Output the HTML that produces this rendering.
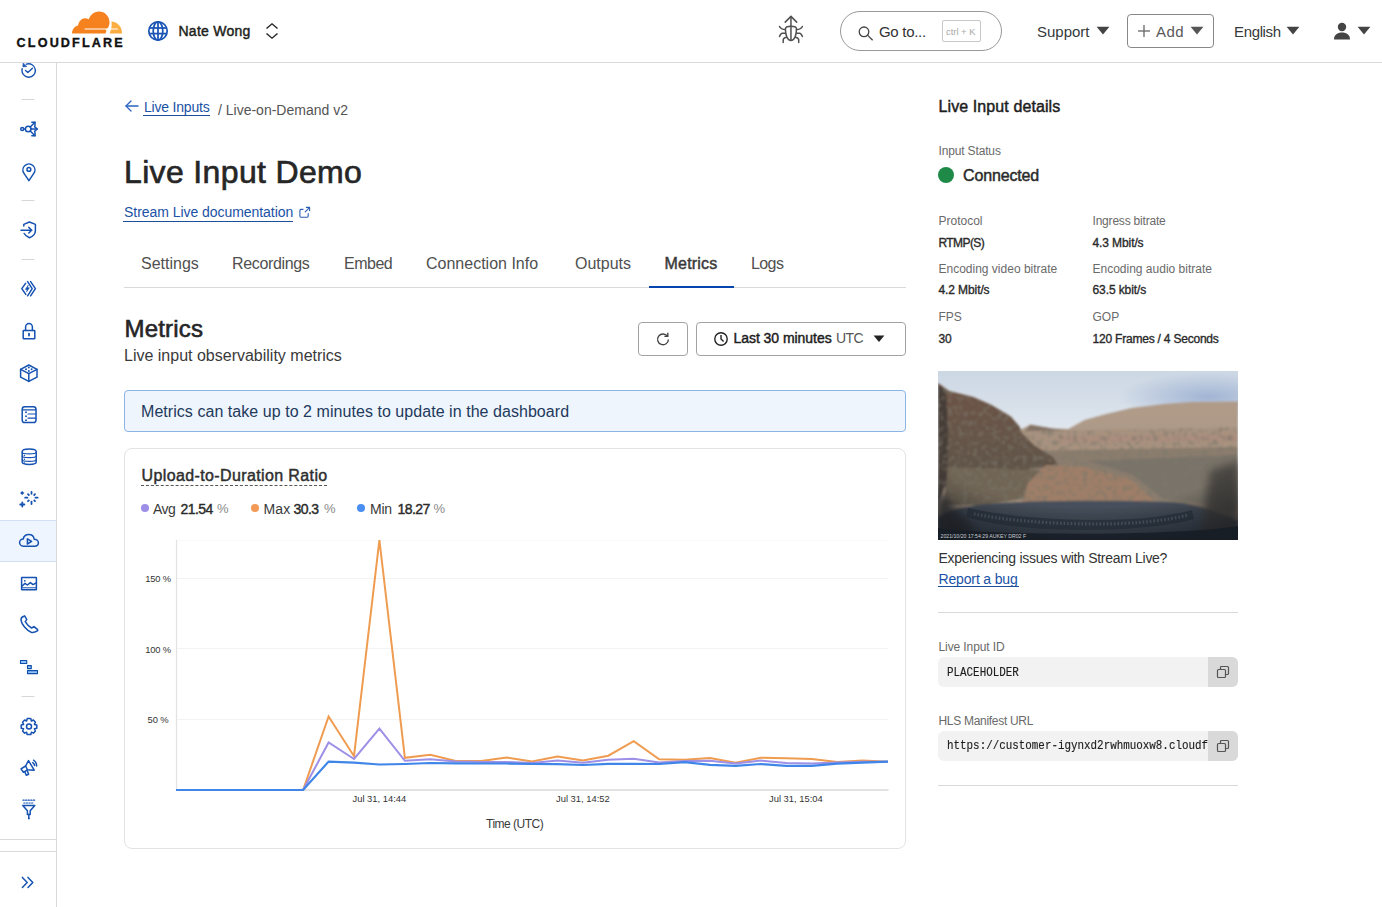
<!DOCTYPE html>
<html><head><meta charset="utf-8">
<style>
*{box-sizing:border-box;margin:0;padding:0}
html,body{width:1382px;height:907px;overflow:hidden;background:#fff;font-family:"Liberation Sans",sans-serif;color:#313131}
.t{position:absolute;line-height:1;white-space:nowrap}
.hdr{position:absolute;left:0;top:0;width:1382px;height:63px;border-bottom:1px solid #d9d9d9;background:#fff}
.side{position:absolute;left:0;top:63px;width:57px;height:844px;border-right:1px solid #d9d9d9;background:#fff}
.ic{position:absolute}
.sep{position:absolute;left:22px;width:12px;height:1px;background:#d9d9d9}
a{color:#0a52b5;text-decoration:none}
</style></head><body>
<!-- HEADER -->
<div class="hdr"></div>
<svg class="ic" style="left:70px;top:10px" width="54" height="25" viewBox="0 0 54 25">
  <path fill="#f6821f" d="M2 23.6 C2 19.5 4.5 16.5 8 15.6 C8.6 11.5 11.5 8.2 15 8.2 C16.5 8.2 17.8 8.6 18.8 9.2 C20.5 4.5 24.5 1.6 29 1.6 C35 1.6 39.5 6.5 39.5 12.2 C39.5 14.5 38.8 16.5 37.6 18.2 L36.2 18.6 L14.6 18.6 L14.6 19.6 L35.2 19.6 C36.2 19.6 36.6 20.4 36.2 21.4 L35.6 23.6 Z"/>
  <path fill="#fbad41" d="M39.6 23.6 L40.6 20.4 C40.9 19.8 41.2 19.6 42 19.6 L48 19.6 L48 18.6 L41.2 18.6 C41.8 16.4 41.8 13.6 41.4 11.4 C47 11.6 52 16.6 52 22.6 L52 23.6 Z"/>
</svg>
<div class="t" style="left:16.6px;top:36.8px;font-size:12.6px;font-weight:700;letter-spacing:2.15px;color:#111;-webkit-text-stroke:0.35px #111">CLOUDFLARE</div>

<svg class="ic" style="left:147px;top:20px" width="22" height="22" viewBox="0 0 22 22" fill="none" stroke="#1a55b5" stroke-width="1.75">
  <circle cx="11" cy="11" r="9.2"/>
  <ellipse cx="11" cy="11" rx="4.8" ry="9.2"/>
  <line x1="11" y1="1.8" x2="11" y2="20.2"/>
  <line x1="2" y1="8" x2="20" y2="8"/>
  <line x1="2" y1="13.6" x2="20" y2="13.6"/>
</svg>
<div class="t" style="left:178.5px;top:24.2px;font-size:14px;-webkit-text-stroke:0.45px #1d1f20;color:#1d1f20;letter-spacing:0.25px">Nate Wong</div>
<svg class="ic" style="left:265px;top:22px" width="14" height="18" viewBox="0 0 14 18" fill="none" stroke="#222" stroke-width="1.4">
  <polyline points="1.5,6.5 7,1.8 12.5,6.5"/>
  <polyline points="1.5,11.5 7,16.2 12.5,11.5"/>
</svg>

<!-- bug -->
<svg class="ic" style="left:777px;top:15px" width="28" height="29" viewBox="0 0 28 29" fill="none" stroke="#505050" stroke-width="1.5" stroke-linecap="round" stroke-linejoin="round">
  <polyline points="8.2,7.1 13.95,1.4 19.7,7.1"/>
  <line x1="13.95" y1="1.6" x2="13.95" y2="25.2"/>
  <path d="M8.4 14 C8.4 12 10 11.3 13.95 11.3 C17.9 11.3 19.5 12 19.5 14 C19.5 20 17.5 25.4 13.95 25.4 C10.4 25.4 8.4 20 8.4 14 Z"/>
  <path d="M8.4 14.6 C5.5 14.5 3.5 13.5 2.5 11.5"/><path d="M19.5 14.6 C22.4 14.5 24.4 13.5 25.4 11.5"/>
  <path d="M8.6 18.3 L5.3 18.3 C4.2 18.3 3.2 19.8 2.5 21.5"/><path d="M19.3 18.3 L22.6 18.3 C23.7 18.3 24.7 19.8 25.4 21.5"/>
  <path d="M9.5 22.2 C7.5 22.6 6.2 23.2 6.2 24.8 L6.2 27.4"/><path d="M18.4 22.2 C20.4 22.6 21.7 23.2 21.7 24.8 L21.7 27.4"/>
</svg>

<!-- search pill -->
<div style="position:absolute;left:840px;top:11px;width:162px;height:40px;border:1px solid #999;border-radius:20px"></div>
<svg class="ic" style="left:857px;top:25px" width="18" height="16" viewBox="0 0 18 16" fill="none" stroke="#444" stroke-width="1.3">
  <circle cx="7" cy="6.8" r="4.8"/>
  <line x1="10.8" y1="10.4" x2="15.6" y2="15.2"/>
</svg>
<div class="t" style="left:879px;top:24px;font-size:15px;color:#333;letter-spacing:-0.3px">Go to...</div>
<div style="position:absolute;left:942px;top:20px;width:39px;height:22px;border:1px solid #c8c8c8;border-radius:2px"></div>
<div class="t" style="left:946px;top:26.5px;font-size:9.4px;color:#a8a8a8">ctrl + K</div>

<div class="t" style="left:1037px;top:24px;font-size:15px;color:#36393a">Support</div>
<svg class="ic" style="left:1096px;top:26px" width="14" height="9" viewBox="0 0 14 9"><polygon points="0.6,0.8 13.4,0.8 7,8.4" fill="#444"/></svg>

<div style="position:absolute;left:1127px;top:14px;width:87px;height:34px;border:1px solid #888;border-radius:4px"></div>
<svg class="ic" style="left:1137px;top:24px" width="14" height="14" viewBox="0 0 14 14" stroke="#666" stroke-width="1.3"><line x1="7" y1="1" x2="7" y2="13"/><line x1="1" y1="7" x2="13" y2="7"/></svg>
<div class="t" style="left:1156px;top:24px;font-size:15px;color:#595959;letter-spacing:0.4px">Add</div>
<svg class="ic" style="left:1190px;top:26px" width="14" height="9" viewBox="0 0 14 9"><polygon points="0.6,0.8 13.4,0.8 7,8.4" fill="#555"/></svg>

<div class="t" style="left:1234px;top:24px;font-size:15px;color:#36393a;letter-spacing:-0.35px">English</div>
<svg class="ic" style="left:1286px;top:26px" width="14" height="9" viewBox="0 0 14 9"><polygon points="0.6,0.8 13.4,0.8 7,8.4" fill="#444"/></svg>

<svg class="ic" style="left:1333px;top:22px" width="18" height="18" viewBox="0 0 18 18" fill="#444">
  <circle cx="9" cy="5" r="4.2"/>
  <path d="M1 17.4 C1 12.5 4.5 10.4 9 10.4 C13.5 10.4 17 12.5 17 17.4 Z"/>
</svg>
<svg class="ic" style="left:1357px;top:26px" width="14" height="9" viewBox="0 0 14 9"><polygon points="0.6,0.8 13.4,0.8 7,8.4" fill="#444"/></svg>
<!-- MAIN -->
<svg class="ic" style="left:124px;top:99px" width="16" height="14" viewBox="0 0 16 14" fill="none" stroke="#2a63c0" stroke-width="1.3" stroke-linecap="round"><line x1="2" y1="7" x2="14" y2="7"/><polyline points="7,2 2,7 7,12"/></svg>
<div class="t" style="left:144px;top:99.8px;font-size:14px;color:#1a52a6;letter-spacing:-0.2px">Live Inputs</div>
<div style="position:absolute;left:143px;top:115px;width:67px;height:1px;background:#1b4f99"></div>
<div class="t" style="left:218px;top:103.2px;font-size:14px;color:#545454">/ Live-on-Demand v2</div>

<div class="t" style="left:124px;top:156.4px;font-size:32px;font-weight:400;-webkit-text-stroke:0.65px #262626;color:#262626;letter-spacing:0.35px">Live Input Demo</div>
<div class="t" style="left:124px;top:205px;font-size:14px;color:#1a52a6;letter-spacing:-0.05px">Stream Live documentation</div>
<div style="position:absolute;left:123px;top:221px;width:170px;height:1px;background:#1b4f99"></div>
<svg class="ic" style="left:298px;top:205px" width="13" height="13" viewBox="0 0 13 13" fill="none" stroke="#2a5fb0" stroke-width="1.1" stroke-linecap="round" stroke-linejoin="round"><path d="M5 4.4 L3 4.4 Q1.9 4.4 1.9 5.5 L1.9 11.1 Q1.9 12.2 3 12.2 L9.1 12.2 Q10.2 12.2 10.2 11.1 L10.2 8.6"/><line x1="7.2" y1="6.8" x2="11.4" y2="2.6"/><polyline points="8.4,2.4 11.6,2.4 11.6,5.6"/></svg>

<!-- tabs -->
<div style="position:absolute;left:124px;top:287px;width:782px;height:1px;background:#d9d9d9"></div>
<div style="position:absolute;left:649px;top:286px;width:85px;height:2px;background:#0545ad"></div>
<div class="t" style="left:141px;top:256px;font-size:16px;color:#505050">Settings</div>
<div class="t" style="left:232px;top:256px;font-size:16px;color:#505050;letter-spacing:-0.35px">Recordings</div>
<div class="t" style="left:344px;top:256px;font-size:16px;color:#505050;letter-spacing:-0.5px">Embed</div>
<div class="t" style="left:426px;top:256px;font-size:16px;color:#505050">Connection Info</div>
<div class="t" style="left:575px;top:256px;font-size:16px;color:#505050">Outputs</div>
<div class="t" style="left:664.5px;top:256px;font-size:16px;-webkit-text-stroke:0.45px #3a3a3a;color:#3a3a3a;letter-spacing:0.2px">Metrics</div>
<div class="t" style="left:751px;top:256px;font-size:16px;color:#505050;letter-spacing:-0.6px">Logs</div>

<!-- metrics header -->
<div class="t" style="left:124.5px;top:316.6px;font-size:24px;font-weight:400;-webkit-text-stroke:0.6px #262626;color:#262626;letter-spacing:0.2px">Metrics</div>
<div class="t" style="left:124px;top:347.8px;font-size:16px;color:#3a3a3a">Live input observability metrics</div>

<div style="position:absolute;left:638px;top:322px;width:50px;height:34px;border:1px solid #a3a3a3;border-radius:4px"></div>
<svg class="ic" style="left:655px;top:331px" width="16" height="16" viewBox="0 0 16 16" fill="none" stroke="#444" stroke-width="1.4"><path d="M12.4 5.2 A5.4 5.4 0 1 0 13.4 8.4"/><polyline points="12.8,1.8 12.8,5.4 9.4,5.4"/></svg>
<div style="position:absolute;left:696px;top:322px;width:210px;height:34px;border:1px solid #a3a3a3;border-radius:4px"></div>
<svg class="ic" style="left:713px;top:331px" width="16" height="16" viewBox="0 0 16 16" fill="none" stroke="#222" stroke-width="1.4"><circle cx="8" cy="8" r="6.2"/><polyline points="8,4 8,8 10.6,10.6"/></svg>
<div class="t" style="left:733.5px;top:331.2px;font-size:14px;-webkit-text-stroke:0.45px #1d1d1d;color:#1d1d1d;letter-spacing:-0.05px">Last 30 minutes</div>
<div class="t" style="left:836px;top:331.2px;font-size:14px;color:#555;letter-spacing:-0.6px">UTC</div>
<svg class="ic" style="left:873px;top:335px" width="12" height="8" viewBox="0 0 12 8"><polygon points="0.6,0.6 11.4,0.6 6,7" fill="#222"/></svg>

<!-- alert -->
<div style="position:absolute;left:124px;top:390px;width:782px;height:42px;background:#eef5fd;border:1px solid #8db4e6;border-radius:4px"></div>
<div class="t" style="left:141px;top:404px;font-size:16px;color:#1e3a5c;letter-spacing:0.05px">Metrics can take up to 2 minutes to update in the dashboard</div>

<!-- chart card -->
<div style="position:absolute;left:124px;top:448px;width:782px;height:401px;border:1px solid #e3e3e3;border-radius:8px"></div>
<div class="t" style="left:141.5px;top:468.1px;font-size:16px;-webkit-text-stroke:0.45px #2e2e2e;color:#2e2e2e;letter-spacing:0.38px">Upload-to-Duration Ratio</div>
<div style="position:absolute;left:141px;top:485px;width:186px;height:0;border-top:1px dashed #555"></div>
<!-- CHART -->
<div style="position:absolute;left:141px;top:504px;width:8px;height:8px;border-radius:50%;background:#9d8fe8"></div>
<div class="t" style="left:153px;top:502px;font-size:14px;color:#3a3a3a;letter-spacing:-0.5px">Avg</div>
<div class="t" style="left:180.5px;top:502px;font-size:14px;-webkit-text-stroke:0.4px #2a2a2a;color:#2a2a2a;letter-spacing:-0.55px">21.54</div>
<div class="t" style="left:217px;top:502px;font-size:13px;color:#8a8a8a;letter-spacing:-0.5px">%</div>
<div style="position:absolute;left:251px;top:504px;width:8px;height:8px;border-radius:50%;background:#f39a56"></div>
<div class="t" style="left:263.5px;top:502px;font-size:14px;color:#3a3a3a;letter-spacing:0.1px">Max</div>
<div class="t" style="left:293.5px;top:502px;font-size:14px;-webkit-text-stroke:0.4px #2a2a2a;color:#2a2a2a;letter-spacing:-0.55px">30.3</div>
<div class="t" style="left:324px;top:502px;font-size:13px;color:#8a8a8a;letter-spacing:-0.5px">%</div>
<div style="position:absolute;left:357px;top:504px;width:8px;height:8px;border-radius:50%;background:#4a8ef2"></div>
<div class="t" style="left:370px;top:502px;font-size:14px;color:#3a3a3a;letter-spacing:-0.2px">Min</div>
<div class="t" style="left:397.5px;top:502px;font-size:14px;-webkit-text-stroke:0.4px #2a2a2a;color:#2a2a2a;letter-spacing:-0.55px">18.27</div>
<div class="t" style="left:433.5px;top:502px;font-size:13px;color:#8a8a8a;letter-spacing:-0.5px">%</div>
<div class="t" style="left:145.2px;top:573.8px;font-size:9.4px;color:#333;letter-spacing:-0.15px">150 %</div>
<div class="t" style="left:145.2px;top:644.5px;font-size:9.4px;color:#333;letter-spacing:-0.15px">100 %</div>
<div class="t" style="left:147.6px;top:714.8px;font-size:9.4px;color:#333;letter-spacing:-0.15px">50 %</div>
<div class="t" style="left:352.5px;top:793.8px;font-size:9.4px;color:#333;letter-spacing:0px">Jul 31, 14:44</div>
<div class="t" style="left:556px;top:793.8px;font-size:9.4px;color:#333;letter-spacing:0px">Jul 31, 14:52</div>
<div class="t" style="left:769px;top:793.8px;font-size:9.4px;color:#333;letter-spacing:0px">Jul 31, 15:04</div>
<div class="t" style="left:486px;top:818px;font-size:12px;color:#3a3a3a;letter-spacing:-0.5px">Time (UTC)</div>
<svg class="ic" style="left:0;top:0" width="1382" height="907" viewBox="0 0 1382 907" fill="none">
  <g stroke="#f3f3f3" stroke-width="1"><line x1="176" y1="540.5" x2="888" y2="540.5" stroke="#f9f9f9"/><line x1="176" y1="578.5" x2="888" y2="578.5"/><line x1="176" y1="648.5" x2="888" y2="648.5"/><line x1="176" y1="719.5" x2="888" y2="719.5"/></g>
  <line x1="176.5" y1="540" x2="176.5" y2="790" stroke="#e2e2e2" stroke-width="1.2"/>
  <line x1="176" y1="790" x2="888.5" y2="790" stroke="#e2e2e2" stroke-width="2"/>
  <polyline points="176.0,790.0 201.4,790.0 226.9,790.0 252.3,790.0 277.7,790.0 303.1,790.0 328.6,716.5 354.0,756.2 379.4,540.0 404.9,757.8 430.3,754.8 455.7,761.0 481.2,761.0 506.6,757.5 532.0,761.5 557.5,756.4 582.9,760.6 608.3,755.7 633.7,741.2 659.2,759.3 684.6,759.8 710.0,758.0 735.5,762.7 760.9,757.8 786.3,758.3 811.8,758.9 837.2,762.0 862.6,760.6 888.0,761.7" stroke="#ef9b50" stroke-width="2" stroke-linejoin="miter"/>
  <polyline points="176.0,790.0 201.4,790.0 226.9,790.0 252.3,790.0 277.7,790.0 303.1,790.0 328.6,742.5 354.0,759.0 379.4,728.6 404.9,760.8 430.3,759.3 455.7,761.5 481.2,762.0 506.6,762.0 532.0,763.0 557.5,760.6 582.9,762.8 608.3,759.7 633.7,758.8 659.2,762.5 684.6,761.1 710.0,760.8 735.5,763.6 760.9,760.6 786.3,763.0 811.8,763.4 837.2,762.5 862.6,761.7 888.0,761.7" stroke="#9d90e6" stroke-width="2" stroke-linejoin="miter"/>
  <polyline points="176.0,790.0 201.4,790.0 226.9,790.0 252.3,790.0 277.7,790.0 303.1,790.0 328.6,761.6 354.0,762.7 379.4,764.5 404.9,764.0 430.3,763.0 455.7,763.3 481.2,763.5 506.6,763.5 532.0,764.0 557.5,764.2 582.9,765.0 608.3,763.9 633.7,763.9 659.2,764.0 684.6,762.1 710.0,764.9 735.5,765.9 760.9,764.0 786.3,765.9 811.8,765.9 837.2,763.6 862.6,762.7 888.0,761.7" stroke="#3f86e8" stroke-width="2.2" stroke-linejoin="miter"/>
</svg>
<!-- RIGHT PANEL -->
<div class="t" style="left:938.5px;top:99.1px;font-size:16px;-webkit-text-stroke:0.45px #1d1d1d;color:#1d1d1d;letter-spacing:0.1px">Live Input details</div>
<div class="t" style="left:938.5px;top:144.6px;font-size:12px;color:#6a6a6a;letter-spacing:-0.15px">Input Status</div>
<div style="position:absolute;left:938px;top:167px;width:16px;height:16px;border-radius:50%;background:#1f8a48"></div>
<div class="t" style="left:963px;top:168.3px;font-size:16px;-webkit-text-stroke:0.45px #2a2a2a;color:#2a2a2a;letter-spacing:-0.15px">Connected</div>

<div class="t" style="left:938.5px;top:215px;font-size:12px;color:#6a6a6a">Protocol</div>
<div class="t" style="left:938.5px;top:236.7px;font-size:12px;-webkit-text-stroke:0.35px #2a2a2a;color:#2a2a2a;letter-spacing:-0.6px">RTMP(S)</div>
<div class="t" style="left:1092.5px;top:215px;font-size:12px;color:#6a6a6a;letter-spacing:-0.2px">Ingress bitrate</div>
<div class="t" style="left:1092.5px;top:236.7px;font-size:12px;-webkit-text-stroke:0.35px #2a2a2a;color:#2a2a2a;letter-spacing:-0.1px">4.3 Mbit/s</div>
<div class="t" style="left:938.5px;top:263.2px;font-size:12px;color:#6a6a6a">Encoding video bitrate</div>
<div class="t" style="left:938.5px;top:284.4px;font-size:12px;-webkit-text-stroke:0.35px #2a2a2a;color:#2a2a2a;letter-spacing:-0.1px">4.2 Mbit/s</div>
<div class="t" style="left:1092.5px;top:263.2px;font-size:12px;color:#6a6a6a">Encoding audio bitrate</div>
<div class="t" style="left:1092.5px;top:284.4px;font-size:12px;-webkit-text-stroke:0.35px #2a2a2a;color:#2a2a2a;letter-spacing:-0.1px">63.5 kbit/s</div>
<div class="t" style="left:938.5px;top:310.8px;font-size:12px;color:#6a6a6a">FPS</div>
<div class="t" style="left:938.5px;top:332.6px;font-size:12px;-webkit-text-stroke:0.35px #2a2a2a;color:#2a2a2a;letter-spacing:-0.1px">30</div>
<div class="t" style="left:1092.5px;top:310.8px;font-size:12px;color:#6a6a6a">GOP</div>
<div class="t" style="left:1092.5px;top:332.6px;font-size:12px;-webkit-text-stroke:0.35px #2a2a2a;color:#2a2a2a;letter-spacing:-0.21px">120 Frames / 4 Seconds</div>

<svg class="ic" style="left:938px;top:371px" width="300" height="169" viewBox="0 0 300 169">
  <defs>
    <linearGradient id="sky" x1="0" y1="0" x2="0" y2="1"><stop offset="0" stop-color="#ccd7e4"/><stop offset="0.5" stop-color="#e8edf2"/><stop offset="1" stop-color="#e2e8ee"/></linearGradient>
    <radialGradient id="cl" cx="0.9" cy="0.32" r="0.3"><stop offset="0" stop-color="#98add0" stop-opacity="0.85"/><stop offset="1" stop-color="#98add0" stop-opacity="0"/></radialGradient>
    <radialGradient id="vig" cx="0.5" cy="0.2" r="0.85"><stop offset="0.72" stop-color="#15181d" stop-opacity="0"/><stop offset="1" stop-color="#15181d" stop-opacity="0.6"/></radialGradient>
    <linearGradient id="mesa" x1="0" y1="0" x2="0" y2="1"><stop offset="0" stop-color="#b19c8a"/><stop offset="1" stop-color="#a89483"/></linearGradient>
    <linearGradient id="cliff" x1="0" y1="0" x2="0" y2="1"><stop offset="0" stop-color="#6e5144"/><stop offset="0.5" stop-color="#665548"/><stop offset="1" stop-color="#5c5147"/></linearGradient>
    <linearGradient id="hood" x1="0" y1="0" x2="0" y2="1"><stop offset="0" stop-color="#48515c"/><stop offset="1" stop-color="#3a4452"/></linearGradient>
    <filter id="bl" x="-5%" y="-5%" width="110%" height="110%"><feGaussianBlur stdDeviation="1.3"/></filter>
    <filter id="bl3" x="-20%" y="-20%" width="140%" height="140%"><feGaussianBlur stdDeviation="4"/></filter>
    <filter id="bl2" x="-5%" y="-5%" width="110%" height="110%"><feGaussianBlur stdDeviation="0.5"/></filter>
    <filter id="nz" x="0" y="0" width="100%" height="100%"><feTurbulence type="fractalNoise" baseFrequency="0.2" numOctaves="2" seed="7"/><feColorMatrix type="matrix" values="0 0 0 0 0.2  0 0 0 0 0.19  0 0 0 0 0.15  0 0 0 -3.2 1.7"/></filter>
    <clipPath id="gclip"><path d="M0 12 L11 20 L35 26 L53 33.7 L72.7 45.6 L81.4 55.4 L82.5 58.6 L130 60 L300 56 L300 140 L0 140 Z"/></clipPath>
  </defs>
  <rect width="300" height="169" fill="url(#sky)"/>
  <rect width="300" height="80" fill="url(#cl)"/>
  <g filter="url(#bl)">
  <path d="M0 12 L11 20 L35 26 L53 33.7 L72.7 45.6 L81.4 55.4 L82.5 58.6 L92.3 53.7 L114 57.5 L130.3 58 L146.6 48.9 L166.3 43.4 L193.4 36.9 L226 33.1 L253 30.9 L300 30.4 L300 169 L0 169 Z" fill="url(#mesa)"/>
  <path d="M82 66 L92.3 53.7 L114 57.5 L134 60 L134 70 L82 70 Z" fill="#837266"/>
  <path d="M84 60 L300 57 L300 92 L84 92 Z" fill="#a8927f"/>
  <path d="M120 65 L300 63 L300 70 L120 72 Z" fill="#ab8e7e"/>
  <path d="M84 80 L300 76 L300 140 L84 140 Z" fill="#8b7d6e"/>
  <path d="M150 90 L300 84 L300 135 L225 128 L195 104 Z" fill="#7a7369"/>
  <path d="M0 12 L11 20 L35 26 L53 33.7 L72.7 45.6 L81.4 55.4 L84 62 L96 74 L115 86 L120 94 L80 100 L40 110 L0 118 Z" fill="url(#cliff)"/>
  <path d="M0 14 L8 20 L10 60 L9 110 L0 132 Z" fill="#463d37"/>
  <path d="M10 96 L70 98 L110 100 L98 126 L45 134 L6 134 Z" fill="#716555"/>
  <path d="M108 94 L145 96 L192 108 L216 130 L84 132 L90 112 Z" fill="#9f7e67"/>
  <rect x="0" y="0" width="300" height="140" filter="url(#nz)" clip-path="url(#gclip)" opacity="0.65"/>
  <path d="M0 169 L0 146 C12 138 30 134 62 132 C100 129.5 200 129 238 131.5 C262 134 284 142 300 150 L300 169 Z" fill="url(#hood)"/>
  </g>
  <path d="M272 100 L300 90 L300 169 L262 169 Z" fill="#3c3a38" filter="url(#bl3)" opacity="0.8"/>
  <path d="M0 120 L30 150 L40 169 L0 169 Z" fill="#26282c" filter="url(#bl3)" opacity="0.8"/>
  <g filter="url(#bl2)">
  <path d="M30 137 C70 146 120 149 160 149 C200 149 232 145 254 139 L256 148 C228 156 185 159 140 159 C95 159 55 154 28 146 Z" fill="#2f3845"/>
  <path d="M0 157 C60 165 240 165 300 155 L300 169 L0 169 Z" fill="#1f2631"/>
  </g>
  <path d="M36 143 C76 151 124 153 160 153 C200 153 232 149 250 144" stroke="#636d7a" stroke-dasharray="1.6 2" fill="none" stroke-width="3.2" opacity="0.7"/>
  <rect width="300" height="169" fill="url(#vig)"/>
  <text x="2.5" y="166.5" font-family="Liberation Sans" font-size="5.2" fill="#c8ccd2">2021/10/20 17:54:29 AUKEY DR02 F</text>
</svg>

<div class="t" style="left:938.5px;top:550.5px;font-size:14px;color:#333;letter-spacing:-0.3px">Experiencing issues with Stream Live?</div>
<div class="t" style="left:938.5px;top:571.7px;font-size:14px;color:#1a52a6;letter-spacing:-0.15px">Report a bug</div>
<div style="position:absolute;left:938px;top:586px;width:81px;height:1px;background:#1b4f99"></div>

<div style="position:absolute;left:938px;top:612px;width:300px;height:1px;background:#d9d9d9"></div>
<div class="t" style="left:938.5px;top:640.8px;font-size:12px;color:#6a6a6a;letter-spacing:-0.1px">Live Input ID</div>
<div style="position:absolute;left:938px;top:657px;width:300px;height:30px;border-radius:6px;background:#f2f2f2;overflow:hidden"><div style="position:absolute;right:0;top:0;width:30px;height:30px;background:#d9d9d9"></div></div>
<div class="t" style="left:946.6px;top:666.8px;font-family:'Liberation Mono',monospace;font-size:12.5px;color:#1d1d1d;-webkit-text-stroke:0.15px #1d1d1d;transform:scaleX(0.87);transform-origin:0 0">PLACEHOLDER</div>
<svg class="ic" style="left:1215px;top:664px" width="16" height="16" viewBox="0 0 16 16" fill="none" stroke="#555" stroke-width="1.2"><rect x="2.5" y="5.5" width="8" height="8" rx="1"/><path d="M5.5 5.5 L5.5 3.5 Q5.5 2.5 6.5 2.5 L12.5 2.5 Q13.5 2.5 13.5 3.5 L13.5 9.5 Q13.5 10.5 12.5 10.5 L10.5 10.5"/></svg>

<div class="t" style="left:938.5px;top:714.8px;font-size:12px;color:#6a6a6a;letter-spacing:-0.3px">HLS Manifest URL</div>
<div style="position:absolute;left:938px;top:731px;width:300px;height:30px;border-radius:6px;background:#f2f2f2;overflow:hidden"><div class="t" style="left:8.6px;top:9.4px;font-family:'Liberation Mono',monospace;font-size:12.5px;color:#1d1d1d;-webkit-text-stroke:0.15px #1d1d1d;transform:scaleX(0.87);transform-origin:0 0">https://customer-igynxd2rwhmuoxw8.cloudflarestream.com</div><div style="position:absolute;right:0;top:0;width:30px;height:30px;background:#d9d9d9"></div></div>
<svg class="ic" style="left:1215px;top:738px" width="16" height="16" viewBox="0 0 16 16" fill="none" stroke="#555" stroke-width="1.2"><rect x="2.5" y="5.5" width="8" height="8" rx="1"/><path d="M5.5 5.5 L5.5 3.5 Q5.5 2.5 6.5 2.5 L12.5 2.5 Q13.5 2.5 13.5 3.5 L13.5 9.5 Q13.5 10.5 12.5 10.5 L10.5 10.5"/></svg>
<div style="position:absolute;left:938px;top:785px;width:300px;height:1px;background:#d9d9d9"></div>
<!-- SIDEBAR -->
<div class="side"></div>
<div style="position:absolute;left:0;top:520px;width:56px;height:42px;background:#eef5fe;border-top:1px solid #cfe0f7;border-bottom:1px solid #cfe0f7"></div>
<div style="position:absolute;left:0;top:839px;width:56px;height:1px;background:#d9d9d9"></div>
<div style="position:absolute;left:0;top:851px;width:56px;height:1px;background:#d9d9d9"></div>
<svg class="ic" style="left:0;top:63px" width="57" height="844" viewBox="0 63 57 844" fill="none" stroke="#1552b2" stroke-width="1.5" stroke-linecap="round" stroke-linejoin="round">
  <!-- separators -->
  <g stroke="#d6d6d6" stroke-width="1"><line x1="22" y1="99.5" x2="34" y2="99.5"/><line x1="22" y1="200.5" x2="34" y2="200.5"/><line x1="22" y1="259.5" x2="34" y2="259.5"/><line x1="22" y1="696.5" x2="34" y2="696.5"/></g>
  <!-- 1 history check -->
  <path d="M26.4 64.2 A6.7 6.7 0 1 1 22.2 68.8" stroke-width="1.4"/>
  <path d="M23.2 63.4 L22.9 66.8 L26.4 66.5 Z" fill="#1552b2" stroke-width="0.8"/>
  <polyline points="25.5,70.4 27.9,72.6 32.4,68.2" stroke-width="1.4"/>
  <!-- 2 share -->
  <circle cx="22.2" cy="129" r="1.5"/>
  <line x1="23.7" y1="129" x2="25.4" y2="129"/>
  <circle cx="28.2" cy="129" r="2.8"/>
  <line x1="31" y1="129" x2="37.2" y2="129"/>
  <polyline points="34.6,126.6 37.2,129 34.6,131.4"/>
  <line x1="30.2" y1="127" x2="35" y2="122.3"/>
  <polyline points="31.8,122.3 35,122.3 35,125.4"/>
  <line x1="30.2" y1="131" x2="35" y2="135.7"/>
  <polyline points="31.8,135.7 35,135.7 35,132.6"/>
  <!-- 3 pin -->
  <path d="M28.9 180.6 L24 173.4 A6 6 0 1 1 33.8 173.4 Z"/>
  <circle cx="28.9" cy="169.4" r="1.9"/>
  <!-- 4 shield arrow -->
  <path d="M23.8 226 L23.8 224.4 L29.4 222 L35.4 224.4 L35.4 230.5 C35.4 234 32.5 236.6 29.4 237.8 C27 236.8 25 235 24.2 233.5"/>
  <line x1="21" y1="230.2" x2="31.6" y2="230.2"/>
  <polyline points="28.8,227.4 31.6,230.2 28.8,233"/>
  <!-- 5 workers -->
  <polyline points="25.6,283.4 21.8,288.6 25.8,294.4" stroke-width="1.5"/>
  <polyline points="27.6,281.6 32.2,288.6 27.6,295.8" stroke-width="1.5"/>
  <polyline points="30.6,281.6 35.4,288.6 30.6,295.8" stroke-width="1.5"/>
  <path d="M28 285.6 L25.4 289.4 L27.2 289.4 L26.6 291.8 L29.4 287.8 L27.6 287.8 Z" fill="#1552b2" stroke-width="0.6"/>
  <!-- 6 lock -->
  <rect x="23.2" y="330.4" width="11.6" height="8.4" rx="0.6"/>
  <path d="M25.6 330.4 L25.6 327 A3.4 3.6 0 0 1 32.4 327 L32.4 330.4"/>
  <line x1="29" y1="333.6" x2="29" y2="335.6" stroke-width="1.8"/>
  <!-- 7 cube -->
  <path d="M28.8 365 L37 369.4 L37 377.2 L28.8 381.4 L20.6 377.2 L20.6 369.4 Z"/>
  <polyline points="20.6,369.4 28.8,373.6 37,369.4"/>
  <line x1="28.8" y1="373.6" x2="28.8" y2="381.4"/>
  <g fill="#1552b2" stroke="none"><circle cx="28.8" cy="367.4" r="1"/><circle cx="26" cy="369.2" r="1"/><circle cx="31.6" cy="369.2" r="1"/><circle cx="28.8" cy="371" r="1"/></g>
  <!-- 8 db list -->
  <rect x="22.2" y="406.8" width="13.8" height="15.8" rx="2.6"/>
  <line x1="22.4" y1="409.9" x2="35.8" y2="409.9" stroke-width="1.2"/>
  <line x1="28" y1="414" x2="35.8" y2="414" stroke-width="1.2"/>
  <line x1="28" y1="418.2" x2="35.8" y2="418.2" stroke-width="1.2"/>
  <g fill="#1552b2" stroke="none"><circle cx="26" cy="412.2" r="0.95"/><circle cx="26" cy="416.2" r="0.95"/><circle cx="26" cy="420.3" r="0.95"/></g>
  <!-- 9 db -->
  <path d="M22.2 451.6 C22.2 449.8 25.2 448.9 29.2 448.9 C33.2 448.9 36.2 449.8 36.2 451.6 L36.2 462 C36.2 463.6 33.2 464.4 29.2 464.4 C25.2 464.4 22.2 463.6 22.2 462 Z"/>
  <path d="M22.2 452.2 C22.2 453.2 25.2 453.8 29.2 453.8 C33.2 453.8 36.2 453.2 36.2 452.2" stroke-width="1.2"/>
  <path d="M22.2 456 C22.2 457 25.2 457.6 29.2 457.6 C33.2 457.6 36.2 457 36.2 456" stroke-width="1.2"/>
  <path d="M22.2 459.8 C22.2 460.8 25.2 461.4 29.2 461.4 C33.2 461.4 36.2 460.8 36.2 459.8" stroke-width="1.2"/>
  <g fill="#1552b2" stroke="none"><circle cx="24.4" cy="455.4" r="0.75"/><circle cx="24.4" cy="459.2" r="0.75"/><circle cx="24.4" cy="462.9" r="0.75"/></g>
  <!-- 10 sparkle -->
  <g stroke-width="1.8" stroke-linecap="round">
  <line x1="31.5" y1="491.8" x2="31.5" y2="493.8"/><line x1="31.5" y1="501.6" x2="31.5" y2="504"/>
  <line x1="25.2" y1="497.7" x2="27.4" y2="497.7"/><line x1="35.4" y1="497.7" x2="37.6" y2="497.7"/>
  <line x1="28" y1="494.2" x2="28.8" y2="495"/><line x1="34.2" y1="500.4" x2="35" y2="501.2"/>
  <line x1="35" y1="494.2" x2="34.2" y2="495"/><line x1="28.8" y1="500.4" x2="28" y2="501.2"/>
  <line x1="20.2" y1="504.5" x2="24.4" y2="504.5"/><line x1="22.3" y1="502.4" x2="22.3" y2="506.6"/>
  </g>
  <path d="M22.2 490.9 L24.2 492.9 L22.2 494.9 L20.2 492.9 Z" fill="#1552b2" stroke="none"/>
  <!-- 11 cloud play -->
  <path d="M23.4 546.2 C21 546.2 19.6 544.4 19.6 542.6 C19.6 540.6 21.2 539 23.2 539 C23.8 536.2 26 534.6 28.8 534.6 C31.6 534.6 33.8 536.6 34.2 539.2 C36.6 539.2 38.4 540.8 38.4 542.8 C38.4 544.8 36.8 546.2 34.6 546.2 Z"/>
  <path d="M27.4 538.8 L31.6 541.4 L27.4 544 Z"/>
  <!-- 12 image -->
  <rect x="21.6" y="577.4" width="14.8" height="12.4" rx="0.4"/>
  <path d="M21.8 586.2 L25 583.4 L27.4 585 L30.4 582.6 L33 584.6 L36.2 583"/>
  <circle cx="24.8" cy="580.8" r="0.9" fill="#1552b2" stroke="none"/>
  <line x1="21.6" y1="587.8" x2="36.4" y2="587.8" stroke-width="1"/>
  <!-- 13 phone -->
  <path d="M23.8 616.2 C22.2 616.8 20.8 618 21 620.2 C21.6 624.4 26.4 630.2 31.2 632.2 C33.4 633 35.4 632 37.8 630.6 L37.4 629.4 L34 626.6 L31.6 628 C29.4 626.8 26.6 624 25.2 621.6 L26.8 619.6 L24.6 615.8 Z"/>
  <!-- 14 lines -->
  <g stroke-width="1.1" fill="#93c3fb" stroke="#0f4ea8"><rect x="20.5" y="660.5" width="6.2" height="3"/><rect x="27.5" y="665.6" width="3.8" height="3"/><rect x="27.5" y="670.6" width="10" height="3"/></g>
  <!-- 15 gear -->
  <path d="M27.2 718.6 L30.8 718.6 L31.4 721 L33.4 720 L35.4 722.2 L34.4 724.4 L36.8 725 L36.8 728.2 L34.4 728.8 L35.4 731 L33.4 733.2 L31.4 732.2 L30.8 734.6 L27.2 734.6 L26.6 732.2 L24.6 733.2 L22.6 731 L23.6 728.8 L21.2 728.2 L21.2 725 L23.6 724.4 L22.6 722.2 L24.6 720 L26.6 721 Z"/>
  <circle cx="29" cy="726.6" r="2.5"/>
  <!-- 16 megaphone -->
  <path d="M25.6 766 L28.5 760.6 L34.2 770.2 L27.4 769.8 Z"/>
  <path d="M25.6 766 L21 768.9 L23.4 772.3 L27.4 769.8"/>
  <path d="M24.9 772 L26.3 775.2 L28.6 774.3 L27.4 771"/>
  <path d="M32.8 762.6 C33.8 763.4 34.4 764.4 34.5 765.4"/>
  <path d="M33.6 760.2 C35.6 761.4 36.6 763.6 36.6 766"/>
  <!-- 17 funnel -->
  <g stroke-width="1.2" stroke-dasharray="1.2 1.4"><line x1="23" y1="800.2" x2="34.6" y2="800.2"/><line x1="23.8" y1="803" x2="34" y2="803"/></g>
  <path d="M22.8 805.4 L34.8 805.4 L30.2 810.8 L30.2 814.6 L27.4 814.6 L27.4 810.8 Z"/>
  <line x1="28.8" y1="814.6" x2="28.8" y2="818.6"/>
  <circle cx="28.8" cy="818.4" r="0.9" fill="#1552b2" stroke="none"/>
  <!-- 18 expand -->
  <polyline points="22.4,877.4 27.2,882.4 22.4,887.4"/>
  <polyline points="28,877.4 32.8,882.4 28,887.4"/>
</svg>
</body></html>
